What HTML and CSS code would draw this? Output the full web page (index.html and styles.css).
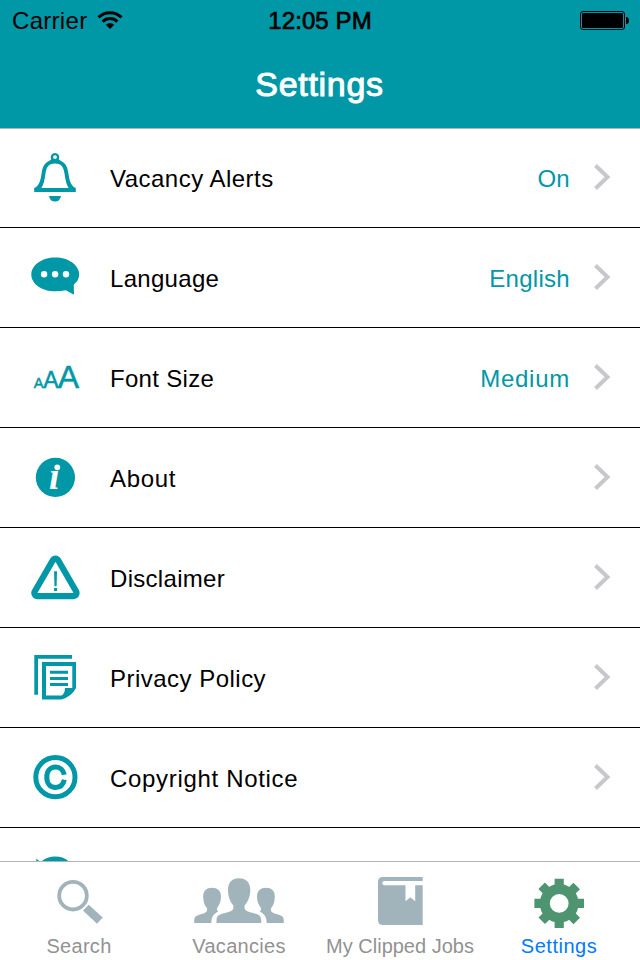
FILE: index.html
```html
<!DOCTYPE html>
<html lang="en">

<head>
    <meta charset="UTF-8">
    <meta name="viewport" content="width=device-width, initial-scale=1.0">
    <title>Settings</title>
    <link rel="stylesheet" href="styles.css">
</head>

<body>
    <div class="screen">
        <header class="header">
            <div class="status-bar">
                <div class="carrier">
                    <span>Carrier</span>
                    <svg class="wifi" width="26" height="20" viewBox="0 0 26 20">
                        <path d="M1.5 7.4A16.3 16.3 0 0 1 24.5 7.4M5.6 11.6A10.5 10.5 0 0 1 20.4 11.6" fill="none" stroke="#000" stroke-width="3" />
                        <path d="M13 19L8.8 14.8A6 6 0 0 1 17.2 14.8Z" />
                    </svg>
                </div>
                <div class="time">12:05 PM</div>
                <svg class="battery" width="50" height="20" viewBox="0 0 50 20">
                    <rect x="0.5" y="0.5" width="44" height="18" rx="2.5" fill="none" stroke="#000" />
                    <rect x="2" y="2" width="41" height="15" rx="1" />
                    <path d="M46 6H47Q49 6.5 49 9.5Q49 12.5 47 13H46Z" />
                </svg>
            </div>
            <h1 class="title">Settings</h1>
        </header>

        <ul class="list">
            <li class="row">
                <svg class="icon" viewBox="0 0 110 99">
                    <path fill-rule="evenodd" d="M51.2 31.2A4.3 4.3 0 1 1 58.8 31.2Q59.5 32.2 61.5 33.2C66.4 35.6 67.6 40 68.4 45.5C69.6 53.5 71.4 58.4 75.8 60V64H34.2V60C38.6 58.4 40.4 53.5 41.6 45.5C42.4 40 43.6 35.6 48.5 33.2Q50.5 32.2 51.2 31.2ZM41.4 60H68.6C66.4 56.5 65.4 52 64.5 45.5C63.7 39.5 61.6 35.4 55 35.4C48.4 35.4 46.3 39.5 45.5 45.5C44.6 52 43.6 56.5 41.4 60ZM55 27.2A1.9 1.9 0 1 0 55 31A1.9 1.9 0 1 0 55 27.2Z" />
                    <path d="M49 68H61Q60 73.6 55 73.6Q50 73.6 49 68Z" />
                </svg>
                <span class="label wide">Vacancy Alerts</span>
                <span class="value">On</span>
                <svg class="chevron" viewBox="0 0 46 99"><path d="M1.5 37.5L13.5 49L1.5 60.5" /></svg>
            </li>
            <li class="row">
                <svg class="icon" viewBox="0 0 110 99">
                    <path d="M55.3 29.4C68.8 29.4 79.2 37 79.2 46.4Q79.2 52 73.8 56.6L74 66.8L65.8 62.2Q61 63.3 55.3 63.3C41.8 63.3 31.3 55.8 31.3 46.4C31.3 37 41.8 29.4 55.3 29.4Z" />
                    <g fill="#fff">
                        <circle cx="44.1" cy="46.3" r="3.2" />
                        <circle cx="55.1" cy="46.3" r="3.2" />
                        <circle cx="66" cy="46.3" r="3.2" />
                    </g>
                </svg>
                <span class="label">Language</span>
                <span class="value">English</span>
                <svg class="chevron" viewBox="0 0 46 99"><path d="M1.5 37.5L13.5 49L1.5 60.5" /></svg>
            </li>
            <li class="row">
                <svg class="icon sizes" viewBox="0 0 110 99">
                    <text x="33.8" y="59.7" font-size="14.6">A</text>
                    <text x="43.3" y="59.7" font-size="23">A</text>
                    <text x="57.8" y="59.7" font-size="32">A</text>
                </svg>
                <span class="label">Font Size</span>
                <span class="value medium">Medium</span>
                <svg class="chevron" viewBox="0 0 46 99"><path d="M1.5 37.5L13.5 49L1.5 60.5" /></svg>
            </li>
            <li class="row">
                <svg class="icon" viewBox="0 0 110 99">
                    <circle cx="55.4" cy="49.4" r="19.6" />
                    <text class="info" x="49" y="60.5">ı</text>
                    <circle cx="57.3" cy="39.3" r="2.9" fill="#fff" />
                </svg>
                <span class="label about">About</span>
                <svg class="chevron" viewBox="0 0 46 99"><path d="M1.5 37.5L13.5 49L1.5 60.5" /></svg>
            </li>
            <li class="row">
                <svg class="icon" viewBox="0 0 110 99">
                    <path class="triangle" d="M55.5 33.8L73.5 65H37.4Z" />
                    <path d="M54.1 43.3H57L56.6 58.3H54.5ZM54.1 60H57V63H54.1Z" />
                </svg>
                <span class="label">Disclaimer</span>
                <svg class="chevron" viewBox="0 0 46 99"><path d="M1.5 37.5L13.5 49L1.5 60.5" /></svg>
            </li>
            <li class="row">
                <svg class="icon" viewBox="0 0 110 99">
                    <path d="M34.3 27H72V30.7H38V66.8H34.3Z" />
                    <path fill-rule="evenodd" d="M42 34H76V60Q71.5 68.8 61.5 71.4H42ZM46 38V67.4H61.8Q64.8 65.6 65 60H72.3V38Z" />
                    <path d="M50 42.8H68V45.8H50ZM50 49H68V52H50ZM50 55H68V58H50Z" />
                </svg>
                <span class="label wide">Privacy Policy</span>
                <svg class="chevron" viewBox="0 0 46 99"><path d="M1.5 37.5L13.5 49L1.5 60.5" /></svg>
            </li>
            <li class="row">
                <svg class="icon line" viewBox="0 0 110 99">
                    <circle cx="55.4" cy="49.2" r="19.6" />
                    <path d="M64.3 46.8C63.3 42 60 38.9 55.6 38.9C50 38.9 46.8 43.2 46.8 49.2C46.8 55.2 50 59.5 55.6 59.5C60 59.5 63.3 56.6 64.3 51.8" />
                </svg>
                <span class="label copyright">Copyright Notice</span>
                <svg class="chevron" viewBox="0 0 46 99"><path d="M1.5 37.5L13.5 49L1.5 60.5" /></svg>
            </li>
            <li class="row">
                <svg class="icon" viewBox="0 0 110 99">
                    <path class="reload" d="M40 39.5A18.6 18.6 0 1 1 36.6 50" />
                    <path d="M36.4 30.5L47.5 41L36.4 43Z" />
                </svg>
            </li>
        </ul>

        <nav class="tabs">
            <div class="tab">
                <svg class="tab-icon" viewBox="0 0 160 72">
                    <circle cx="73" cy="33.7" r="13.8" fill="none" stroke="#a1b4bc" stroke-width="3.8" />
                    <path d="M88.7 42.7L102.7 55.4L97 61.7L83 48.6Z" />
                </svg>
                <span>Search</span>
            </div>
            <div class="tab">
                <svg class="tab-icon" viewBox="0 0 160 72">
                    <path d="M79 16.3C86 16.3 90.3 20.5 90.3 28C90.3 35 87.5 40 85 43C83.8 45.5 84.5 48 88 49.6C94.5 52 101.2 51.5 101.2 58V61H56.5V58C56.5 51.5 63.5 52 70 49.6C73.5 48 74.2 45.5 73 43C70.5 40 68 35 68 28C68 20.5 72 16.3 79 16.3Z" />
                    <path d="M52 25.7C57.5 25.7 61 29 61 34.5C61 40 58.8 43.5 57 46Q56.5 48 58.3 49.6C53 52.5 51.6 55 51.3 61H34.2V58.5C34.2 53 38.5 53.4 43.5 51.5C47 50 47.8 48 46.8 46C44.8 43.5 43.2 40 43.2 34.5C43.2 29 46.5 25.7 52 25.7Z" />
                    <path d="M106 25.7C100.5 25.7 97 29 97 34.5C97 40 99.2 43.5 101 46Q101.5 48 99.7 49.6C105 52.5 106.4 55 106.7 61H123.8V58.5C123.8 53 119.5 53.4 114.5 51.5C111 50 110.2 48 111.2 46C113.2 43.5 114.8 40 114.8 34.5C114.8 29 111.5 25.7 106 25.7Z" />
                </svg>
                <span>Vacancies</span>
            </div>
            <div class="tab clipped">
                <svg class="tab-icon" viewBox="0 0 160 72">
                    <path d="M63 15H102.7V19H64.4A2.1 2.1 0 0 0 64.4 23.3H85.5V39.3L90.3 35.2L95.2 39.3V23.3H102.7V63H63Q58 63 58 58V20Q58 15 63 15Z" />
                </svg>
                <span>My Clipped Jobs</span>
            </div>
            <div class="tab active">
                <svg class="tab-icon" viewBox="0 0 160 72">
                    <g transform="translate(79.2 41.4)">
                        <circle r="14.4" fill="none" stroke="#4f9470" stroke-width="10" />
                        <path id="teeth" d="M-4.6 -24.7H4.6V-17.5H-4.6ZM-4.6 17.5H4.6V24.7H-4.6ZM-24.8 -4.6H-17.5V4.6H-24.8ZM17.5 -4.6H24.8V4.6H17.5Z" />
                        <use href="#teeth" transform="rotate(45)" />
                    </g>
                </svg>
                <span>Settings</span>
            </div>
        </nav>
    </div>
</body>

</html>
```
FILE: styles.css
```css
* {
    margin: 0;
    padding: 0;
    box-sizing: border-box;
}

body {
    font-family: "Liberation Sans", Arial, sans-serif;
    background-color: #fff;
    color: #000;
    overflow: hidden;
}

.screen {
    display: flex;
    flex-direction: column;
    width: 640px;
    height: 960px;
}

.header {
    position: relative;
    height: 128px;
    flex-shrink: 0;
    background-color: #0097a7;
    box-shadow: 0 1px 0 #b2b2b2;
}

.status-bar {
    display: grid;
    grid-template-columns: 1fr auto 1fr;
    height: 40px;
    padding: 0 12px 0 12px;
    font-size: 24px;
    line-height: 42px;
}

.carrier {
    display: flex;
    letter-spacing: 0.3px;
}

.wifi {
    margin: 10px 0 0 10px;
}

.time {
    -webkit-text-stroke: 0.7px #000;
    letter-spacing: 0.1px;
}

.battery {
    justify-self: end;
    margin: 11px -2px 0 0;
}

.title {
    padding-right: 1px;
    font-size: 34px;
    font-weight: normal;
    line-height: 88px;
    text-align: center;
    color: #fff;
    letter-spacing: 0.7px;
    -webkit-text-stroke: 1px #fff;
}

.list {
    list-style: none;
    flex: 1;
    min-height: 0;
    overflow: hidden;
}

.row {
    display: flex;
    height: 100px;
    border-bottom: 1px solid #000;
    font-size: 24px;
    line-height: 102px;
}

.icon {
    width: 110px;
    height: 99px;
    fill: #0097a7;
}

.sizes text {
    stroke: #0097a7;
    stroke-width: 0.5px;
}

.info {
    font-family: "Liberation Serif", serif;
    font-size: 38px;
    font-weight: bold;
    font-style: italic;
    fill: #fff;
}

.triangle {
    fill: #fff;
    stroke: #0097a7;
    stroke-width: 12.4;
    stroke-linejoin: round;
    paint-order: stroke;
}

.line {
    fill: none;
    stroke: #0097a7;
    stroke-width: 5;
}

.reload {
    fill: none;
    stroke: #0097a7;
    stroke-width: 6;
}

.label {
    flex: 1;
    letter-spacing: 0.3px;
}

.label.wide {
    letter-spacing: 0.48px;
}

.label.about {
    letter-spacing: 0.7px;
}

.label.copyright {
    letter-spacing: 0.68px;
}

.value {
    margin-right: 24px;
    color: #0097a7;
    letter-spacing: 0.3px;
}

.value.medium {
    letter-spacing: 0.75px;
}

.chevron {
    width: 46px;
    height: 99px;
    fill: none;
    stroke: #c7c7cc;
    stroke-width: 4;
}

.tabs {
    display: flex;
    flex-shrink: 0;
    height: 99px;
    border-top: 1px solid #b2b2b2;
}

.tab {
    display: flex;
    flex-direction: column;
    width: 160px;
    font-size: 20px;
    line-height: 24px;
    text-align: center;
    color: #929292;
    letter-spacing: 0.3px;
    white-space: nowrap;
}

.tab span {
    margin-right: 2px;
}

.tab.clipped {
    letter-spacing: 0;
}

.tab.clipped span {
    margin-right: 0;
}

.tab-icon {
    width: 160px;
    height: 72px;
    fill: #a1b4bc;
}

.tab.active {
    color: #007aff;
    letter-spacing: 0.5px;
}

.active .tab-icon {
    fill: #4f9470;
}
```
